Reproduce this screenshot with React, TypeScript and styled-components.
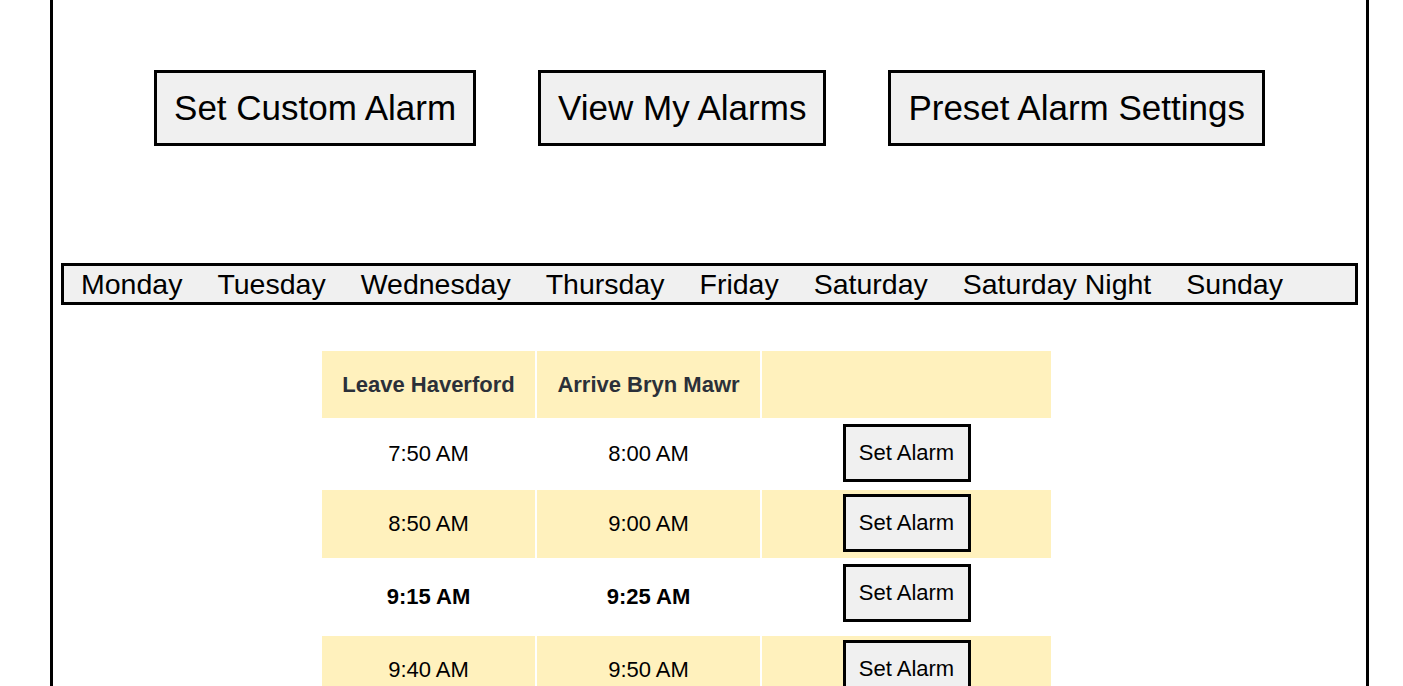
import React from "react";
import styled, { createGlobalStyle } from "styled-components";

const GlobalStyle = createGlobalStyle`
  html, body {
    margin: 0;
    padding: 0;
    height: 686px;
    overflow: hidden;
    background: #ffffff;
    font-family: "Liberation Sans", Arial, Helvetica, sans-serif;
    color: #000;
  }
`;

const Page = styled.div`
  box-sizing: border-box;
  margin-left: 50px;
  width: 1319px;
  min-height: 900px;
  border-left: 3px solid #000;
  border-right: 3px solid #000;
  padding-top: 70px;
`;

const ActionBar = styled.div`
  display: flex;
  justify-content: center;
  gap: 62px;
`;

const ActionButton = styled.button`
  box-sizing: border-box;
  height: 76px;
  padding: 0 17px;
  border: 3px solid #000;
  border-radius: 0;
  background: #f0f0f0;
  font-family: "Liberation Sans", Arial, Helvetica, sans-serif;
  font-size: 35px;
  color: #000;
  cursor: pointer;
`;

const DayNav = styled.nav`
  box-sizing: border-box;
  margin: 117px 8px 0 8px;
  height: 42px;
  border: 3px solid #000;
  background: #f0f0f0;
  display: flex;
  align-items: center;
  gap: 35px;
  padding-left: 17px;
`;

const DayLink = styled.span`
  font-size: 28.5px;
  color: #000;
  line-height: 1;
  cursor: pointer;
`;

const Schedule = styled.table`
  margin: 44px 0 0 267px;
  border-collapse: separate;
  border-spacing: 2px;
  font-family: "Liberation Sans", Arial, Helvetica, sans-serif;
`;

const HeadCell = styled.th<{ $w: number }>`
  width: ${(p) => p.$w}px;
  height: 67px;
  padding: 0;
  background: #fff1bd;
  color: #2b3039;
  font-size: 22px;
  font-weight: bold;
  text-align: center;
  vertical-align: middle;
`;

const Row = styled.tr<{ $shaded: boolean; $tall: boolean }>`
  height: ${(p) => (p.$tall ? 74 : 68)}px;
  background: ${(p) => (p.$shaded ? "#fff1bd" : "#ffffff")};
`;

const TimeCell = styled.td<{ $bold: boolean }>`
  padding: 0;
  text-align: center;
  vertical-align: middle;
  font-size: 22px;
  font-weight: ${(p) => (p.$bold ? "bold" : "normal")};
  color: #000;
`;

const ActionCell = styled.td`
  padding: 4px 0 0 0;
  text-align: center;
  vertical-align: top;
`;

const AlarmButton = styled.button`
  box-sizing: border-box;
  width: 128px;
  height: 58px;
  border: 3px solid #000;
  border-radius: 0;
  background: #f0f0f0;
  font-family: "Liberation Sans", Arial, Helvetica, sans-serif;
  font-size: 22px;
  color: #000;
  padding: 0;
  cursor: pointer;
`;

const days = [
  "Monday",
  "Tuesday",
  "Wednesday",
  "Thursday",
  "Friday",
  "Saturday",
  "Saturday Night",
  "Sunday",
];

const trips = [
  { leave: "7:50 AM", arrive: "8:00 AM", bold: false },
  { leave: "8:50 AM", arrive: "9:00 AM", bold: false },
  { leave: "9:15 AM", arrive: "9:25 AM", bold: true },
  { leave: "9:40 AM", arrive: "9:50 AM", bold: false },
  { leave: "10:15 AM", arrive: "10:25 AM", bold: false },
  { leave: "10:50 AM", arrive: "11:00 AM", bold: false },
];

export default function App() {
  return (
    <>
      <GlobalStyle />
      <Page>
        <ActionBar>
          <ActionButton>Set Custom Alarm</ActionButton>
          <ActionButton>View My Alarms</ActionButton>
          <ActionButton>Preset Alarm Settings</ActionButton>
        </ActionBar>
        <DayNav>
          {days.map((d) => (
            <DayLink key={d}>{d}</DayLink>
          ))}
        </DayNav>
        <Schedule>
          <thead>
            <tr>
              <HeadCell $w={213}>Leave Haverford</HeadCell>
              <HeadCell $w={223}>Arrive Bryn Mawr</HeadCell>
              <HeadCell $w={289}></HeadCell>
            </tr>
          </thead>
          <tbody>
            {trips.map((t, i) => (
              <Row key={t.leave} $shaded={i % 2 === 1} $tall={t.bold}>
                <TimeCell $bold={t.bold}>{t.leave}</TimeCell>
                <TimeCell $bold={t.bold}>{t.arrive}</TimeCell>
                <ActionCell>
                  <AlarmButton>Set Alarm</AlarmButton>
                </ActionCell>
              </Row>
            ))}
          </tbody>
        </Schedule>
      </Page>
    </>
  );
}
